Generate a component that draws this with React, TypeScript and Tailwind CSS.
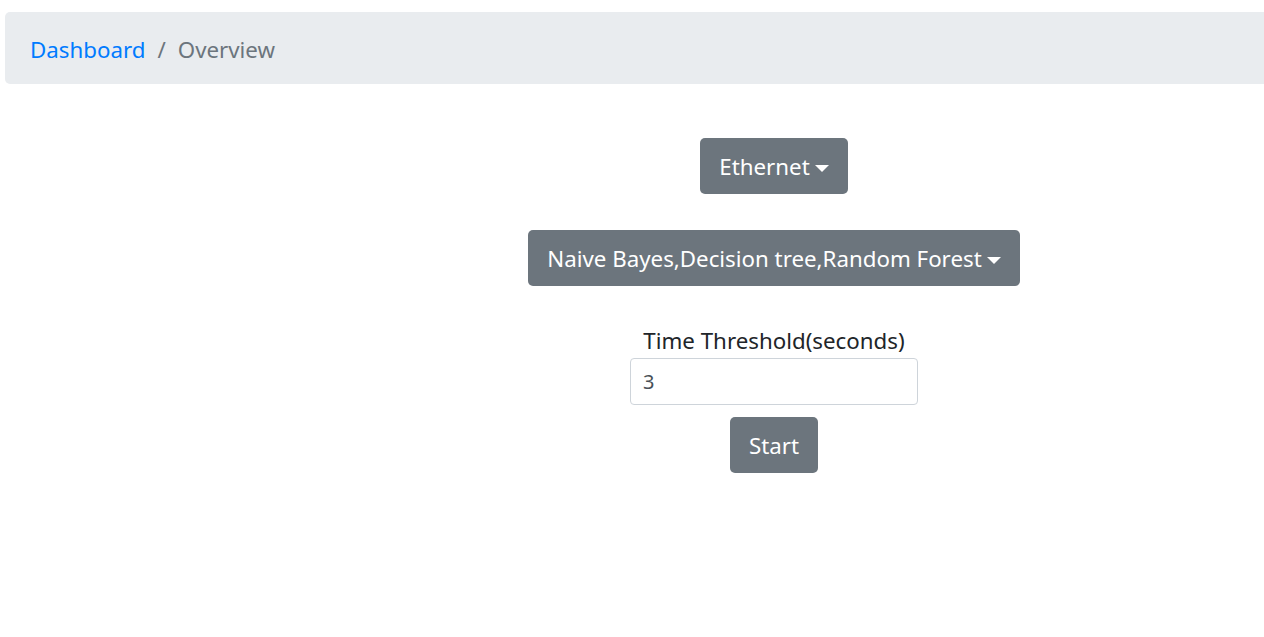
const Caret = () => (
  <span className="ml-[5px] inline-block h-0 w-0 translate-y-[1px] border-x-[7px] border-t-[7px] border-x-transparent border-t-white align-middle" />
);

const App = () => {
  return (
    <div className="min-h-[637px] w-full overflow-hidden bg-white font-['Noto_Sans',sans-serif] text-[#212529]">
      <div className="pt-[12px]">
        <nav className="ml-[5px] mr-[-20px] flex h-[72px] items-center rounded-[5px] bg-[#e9ecef] pl-[25px] pt-[3px] text-[22.3px]">
          <a className="text-[#007bff]" href="#">
            Dashboard
          </a>
          <span className="px-[12px] text-[#6c757d]">/</span>
          <span className="text-[#6c757d]">Overview</span>
        </nav>
      </div>

      <div className="ml-[284px] flex flex-col items-center pt-[54px]">
        <button className="flex h-[56px] items-center rounded-[5px] bg-[#6c757d] px-[19px] pt-[2px] text-[22.3px] text-white">
          Ethernet
          <Caret />
        </button>

        <button className="mt-[36px] flex h-[56px] items-center rounded-[5px] bg-[#6c757d] px-[19px] pt-[2px] text-[22.3px] text-white">
          Naive Bayes,Decision tree,Random Forest
          <Caret />
        </button>

        <label className="mt-[42px] h-[30px] text-[22.3px] leading-[26px]">Time Threshold(seconds)</label>
        <input
          className="h-[47px] w-[288px] rounded-[4px] border border-[#ced4da] px-[12px] text-[20px] text-[#495057] outline-none"
          defaultValue="3"
        />

        <button className="mt-[12px] flex h-[56px] items-center rounded-[5px] bg-[#6c757d] px-[19px] pt-[2px] text-[22.3px] text-white">
          Start
        </button>
      </div>
    </div>
  );
};

export default App;
